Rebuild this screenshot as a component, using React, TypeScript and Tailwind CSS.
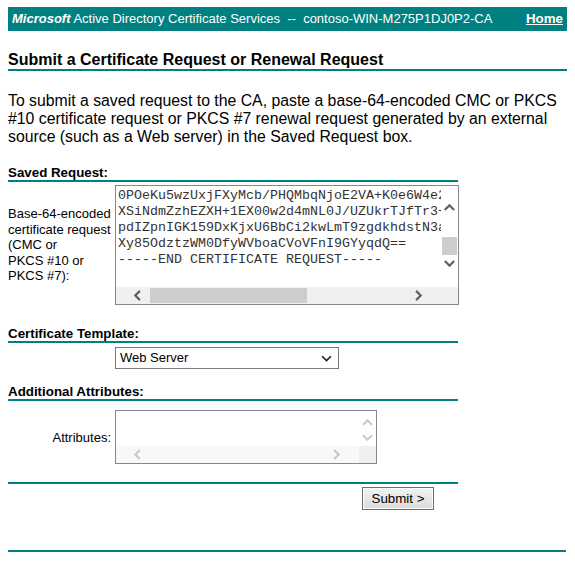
import React from "react";

type Dir = "up" | "down" | "left" | "right";

function Chevron({ dir, color, size = 10, sw = 1.8 }: { dir: Dir; color: string; size?: number; sw?: number }) {
  const d: Record<Dir, string> = {
    up: "M1.5 6.5 L5 3 L8.5 6.5",
    down: "M1.5 3.5 L5 7 L8.5 3.5",
    left: "M6.5 1.5 L3 5 L6.5 8.5",
    right: "M3.5 1.5 L7 5 L3.5 8.5",
  };
  return (
    <svg width={size} height={size} viewBox="0 0 10 10" fill="none">
      <path d={d[dir]} stroke={color} strokeWidth={sw} strokeLinecap="square" strokeLinejoin="miter" />
    </svg>
  );
}

const lines = [
  "0POeKu5wzUxjFXyMcb/PHQMbqNjoE2VA+K0e6W4e2JkQ",
  "XSiNdmZzhEZXH+1EX00w2d4mNL0J/UZUkrTJfTr3+aQw",
  "pdIZpnIGK159DxKjxU6BbCi2kwLmT9zgdkhdstN3aBcd",
  "Xy85OdztzWM0DfyWVboaCVoVFnI9GYyqdQ==",
  "-----END CERTIFICATE REQUEST-----",
];

function SavedRequestBox() {
  return (
    <div className="flex h-[120px] w-[344px] flex-col border border-[#828790] bg-white">
      <div className="flex h-[102px]">
        <div className="flex-1 overflow-hidden whitespace-pre pl-[2px] pt-[2px] font-['Liberation_Mono','Courier_New',monospace] text-[13.33px] leading-[16px] text-[#333]">
          {lines.map((l, i) => (
            <div key={i}>{l}</div>
          ))}
        </div>
        <div className="flex w-[17px] flex-col bg-white">
          <div className="h-[13px]" />
          <div className="flex h-[17px] items-center justify-center">
            <Chevron dir="up" color="#606060" size={11} sw={2} />
          </div>
          <div className="h-[21px]" />
          <div className="mx-[1px] h-[18px] bg-[#cdcdcd]" />
          <div className="flex h-[17px] items-center justify-center">
            <Chevron dir="down" color="#606060" size={11} sw={2} />
          </div>
          <div className="flex-1" />
        </div>
      </div>
      <div className="flex h-[17px]">
        <div className="flex flex-1 bg-[#f0f0f0]">
          <div className="w-[13px]" />
          <div className="flex w-[17px] items-center justify-center">
            <Chevron dir="left" color="#606060" size={11} sw={2} />
          </div>
          <div className="w-[4px]" />
          <div className="my-[1px] w-[157px] bg-[#cdcdcd]" />
          <div className="flex-1" />
          <div className="flex w-[17px] items-center justify-center">
            <Chevron dir="right" color="#606060" size={11} sw={2} />
          </div>
          <div className="w-[14px]" />
        </div>
        <div className="w-[17px] bg-[#f0f0f0]" />
      </div>
    </div>
  );
}

function AttributesBox() {
  return (
    <div className="flex h-[54px] w-[262px] flex-col border border-[#828790] bg-white">
      <div className="flex h-[35px]">
        <div className="flex-1" />
        <div className="flex w-[17px] flex-col bg-white">
          <div className="h-[4px]" />
          <div className="flex h-[15px] items-center justify-center">
            <Chevron dir="up" color="#c6c6c6" size={11} />
          </div>
          <div className="flex h-[15px] items-center justify-center">
            <Chevron dir="down" color="#c6c6c6" size={11} />
          </div>
        </div>
      </div>
      <div className="flex h-[17px]">
        <div className="flex flex-1 bg-[#f8f8f8]">
          <div className="w-[13px]" />
          <div className="flex w-[17px] items-center justify-center">
            <Chevron dir="left" color="#c6c6c6" size={11} />
          </div>
          <div className="flex-1" />
          <div className="flex w-[17px] items-center justify-center">
            <Chevron dir="right" color="#c6c6c6" size={11} />
          </div>
          <div className="w-[14px]" />
        </div>
        <div className="w-[17px] bg-[#f0f0f0]" />
      </div>
    </div>
  );
}

function SectionHeading({ children, className = "" }: { children: React.ReactNode; className?: string }) {
  return (
    <div className={`w-[450px] border-b-2 border-[#008080] text-[13.33px] font-bold leading-[15px] ${className}`}>
      {children}
    </div>
  );
}

export default function App() {
  return (
    <div className="min-h-[564px] bg-white px-2 pt-[7px] font-['Liberation_Sans',Arial,sans-serif] text-black">
      <div className="flex h-6 items-center justify-between bg-[#008080] pl-1 pr-[4px] text-[13px] text-white">
        <span className="whitespace-pre">
          <i className="font-bold">Microsoft</i> Active Directory Certificate Services{"\u00a0\u00a0--\u00a0\u00a0"}contoso-WIN-M275P1DJ0P2-CA
        </span>
        <a className="text-[13.33px] font-bold text-white underline" href="#">
          Home
        </a>
      </div>

      <div className="mt-5 border-b-2 border-[#008080] text-[16px] font-bold leading-[18px]">
        Submit a Certificate Request or Renewal Request
      </div>

      <p className="mt-[21px] whitespace-nowrap text-[15.8px] leading-[18px]">
        To submit a saved request to the CA, paste a base-64-encoded CMC or PKCS
        <br />
        #10 certificate request or PKCS #7 renewal request generated by an external
        <br />
        source (such as a Web server) in the Saved Request box.
      </p>

      <SectionHeading className="mt-[19px]">Saved Request:</SectionHeading>
      <div className="mt-[3px] flex items-center">
        <div className="w-[107px] whitespace-nowrap text-[13px] leading-[15.5px]">
          Base-64-encoded
          <br />
          certificate request
          <br />
          (CMC or
          <br />
          PKCS #10 or
          <br />
          PKCS #7):
        </div>
        <SavedRequestBox />
      </div>

      <SectionHeading className="mt-[21px]">Certificate Template:</SectionHeading>
      <div className="mt-[4px] flex">
        <div className="w-[107px]" />
        <div className="flex h-[22px] w-[224px] items-center justify-between border border-[#7a7a7a] bg-white pl-[4px] pr-[6px] text-[13px]">
          <span>Web Server</span>
          <Chevron dir="down" color="#222" size={11} sw={1.5} />
        </div>
      </div>

      <SectionHeading className="mt-[15px]">Additional Attributes:</SectionHeading>
      <div className="mt-[9px] flex items-center">
        <div className="w-[107px] pr-[4px] text-right text-[13px] leading-[15px]">Attributes:</div>
        <AttributesBox />
      </div>

      <div className="mt-[18px] h-[2px] w-[450px] bg-[#008080]" />
      <div className="mt-[3px] flex">
        <div className="w-[354px]" />
        <button
          type="button"
          className="h-[23px] w-[72px] border border-[#707070] bg-gradient-to-b from-[#f2f2f2] to-[#dcdcdc] text-[13.33px] leading-[15px] text-black shadow-[inset_0_0_0_1px_#fcfcfc]"
        >
          Submit &gt;
        </button>
      </div>

      <div className="mt-[40px] h-[2px] w-[558px] bg-[#008080]" />
    </div>
  );
}
